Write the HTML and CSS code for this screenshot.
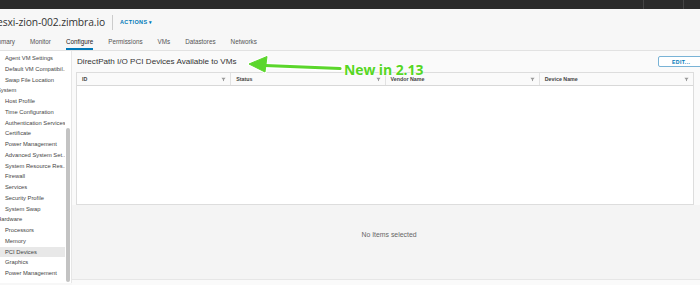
FILE: index.html
```html
<!DOCTYPE html>
<html lang="en">
<head>
    <meta charset="UTF-8">
    <title>esxi-zion-002.zimbra.io - Configure</title>
    <link rel="stylesheet" href="styles.css">
</head>
<body>

<div class="topbar">
    <span class="topbar-sep"></span>
    <span class="topbar-sep"></span>
</div>

<header class="header">
    <div class="title-row">
        <h1 class="host-name">esxi-zion-002.zimbra.io</h1>
        <span class="title-sep"></span>
        <a class="actions">ACTIONS <span class="caret">&#9662;</span></a>
    </div>
    <nav class="tabs">
        <a class="tab first">Summary</a>
        <a class="tab">Monitor</a>
        <a class="tab active">Configure</a>
        <a class="tab">Permissions</a>
        <a class="tab">VMs</a>
        <a class="tab">Datastores</a>
        <a class="tab">Networks</a>
    </nav>
</header>

<div class="content">
    <aside class="sidebar">
        <ul class="nav-list">
            <li class="nav-item">Agent VM Settings</li>
            <li class="nav-item">Default VM Compatibil...</li>
            <li class="nav-item">Swap File Location</li>
            <li class="nav-group">System</li>
            <li class="nav-item">Host Profile</li>
            <li class="nav-item">Time Configuration</li>
            <li class="nav-item">Authentication Services</li>
            <li class="nav-item">Certificate</li>
            <li class="nav-item">Power Management</li>
            <li class="nav-item">Advanced System Set...</li>
            <li class="nav-item">System Resource Res...</li>
            <li class="nav-item">Firewall</li>
            <li class="nav-item">Services</li>
            <li class="nav-item">Security Profile</li>
            <li class="nav-item">System Swap</li>
            <li class="nav-group">Hardware</li>
            <li class="nav-item">Processors</li>
            <li class="nav-item">Memory</li>
            <li class="nav-item selected">PCI Devices</li>
            <li class="nav-item">Graphics</li>
            <li class="nav-item">Power Management</li>
        </ul>
        <div class="scroll-track"><div class="scroll-thumb"></div></div>
    </aside>

    <main class="main">
        <div class="section-head">
            <h2 class="section-title">DirectPath I/O PCI Devices Available to VMs</h2>
            <button class="btn-edit">EDIT...</button>
        </div>

        <div class="grid">
            <div class="grid-head">
                <div class="col">ID <svg class="filter" viewBox="0 0 6 6"><path d="M0.5 1h5L3.6 3.3V5.2L2.4 4.6V3.3z"/></svg></div>
                <div class="col">Status <svg class="filter" viewBox="0 0 6 6"><path d="M0.5 1h5L3.6 3.3V5.2L2.4 4.6V3.3z"/></svg></div>
                <div class="col">Vendor Name <svg class="filter" viewBox="0 0 6 6"><path d="M0.5 1h5L3.6 3.3V5.2L2.4 4.6V3.3z"/></svg></div>
                <div class="col">Device Name <svg class="filter" viewBox="0 0 6 6"><path d="M0.5 1h5L3.6 3.3V5.2L2.4 4.6V3.3z"/></svg></div>
            </div>
            <div class="grid-body"></div>
        </div>

        <div class="details">No Items selected</div>
    </main>
</div>

<!-- annotation drawn over the screenshot -->
<div class="callout">
    <svg class="callout-arrow" width="100" height="22" viewBox="0 0 100 22">
        <path d="M93 13.5 L18 10.5" stroke="#ffffff" stroke-width="6" stroke-linecap="round" fill="none"/>
        <path d="M2 9 L20 1.5 L18 17 Z" fill="#ffffff" stroke="#ffffff" stroke-width="3" stroke-linejoin="round"/>
        <path d="M93 13.5 L18 10.5" stroke="#5bd62c" stroke-width="3.2" stroke-linecap="round" fill="none"/>
        <path d="M2 9 L20 1.5 L18 17 Z" fill="#5bd62c" stroke="#5bd62c" stroke-width="1" stroke-linejoin="round"/>
    </svg>
    <span class="callout-text">New in 2.13</span>
</div>

</body>
</html>
```

FILE: styles.css
```css
* { box-sizing: border-box; }
html, body { margin: 0; padding: 0; }
body { width: 700px; height: 285px; overflow: hidden; background: #f7f7f7; font-family: "Liberation Sans", Arial, sans-serif; color: #333; position: relative; }

.topbar { height: 9px; background: #2b2b2b; display: flex; justify-content: flex-end; gap: 39px; padding-right: 16px; }
.topbar-sep { width: 1px; background: #444; }

.header { height: 42px; background: #f7f7f7; border-bottom: 1px solid #e2e2e2; }
.title-row { height: 25px; display: flex; align-items: center; padding-top: 1px; }
.host-name { margin: 0 0 0 -3px; font-family: "Open Sans", sans-serif; font-weight: 400; font-size: 10.3px; color: #333; letter-spacing: -0.1px; }
.title-sep { width: 1px; height: 15px; background: #ccc; margin: 0 7px 0 7px; }
.actions { font-size: 5.5px; font-weight: bold; color: #0079b8; letter-spacing: 0.4px; }
.caret { font-size: 5px; }

.tabs { display: flex; gap: 15px; height: 16px; }
.tab { font-size: 6.3px; color: #555; line-height: 14px; padding-top: 1px; border-bottom: 2px solid transparent; }
.tab.first { margin-left: -12px; }
.tab.active { color: #222; border-bottom-color: #0079b8; }

.content { display: flex; height: 234px; }

.sidebar { width: 72px; background: #fff; border-right: 1px solid #e6e6e6; display: flex; height: 232px; overflow: hidden; }
.nav-list { list-style: none; margin: 0; padding: 2px 0 0 0; flex: 1; min-width: 0; }
.nav-item, .nav-group { height: 10.75px; line-height: 10.75px; font-size: 5.8px; color: #444; white-space: nowrap; overflow: hidden; }
.nav-item { padding-left: 5px; }
.nav-group { margin-left: -3px; }
.nav-item.selected { background: #e8e8e8; }
.scroll-track { width: 6px; padding: 77px 1px 0 1px; }
.scroll-thumb { height: 154px; background: #c3c3c3; border-radius: 2px; }

.main { flex: 1; display: flex; flex-direction: column; padding-left: 4px; background: #fafafa; }
.section-head { height: 21px; display: flex; align-items: center; justify-content: space-between; }
.section-title { margin: 0; font-size: 8.1px; font-weight: normal; color: #333; padding-left: 1px; }
.btn-edit { margin-right: -12px; width: 54px; height: 11px; padding: 0 0 0 0; border: 1px solid #79b3d6; border-radius: 2px; background: #fff; color: #0079b8; font-family: "Liberation Sans", Arial, sans-serif; font-size: 5.2px; font-weight: bold; letter-spacing: 0.4px; text-align: left; padding-left: 13px; }

.grid { width: 618px; height: 133px; border: 1px solid #ddd; background: #fff; display: flex; flex-direction: column; }
.grid-head { display: flex; height: 13px; background: #fafafa; border-bottom: 1px solid #d8d8d8; }
.col { flex: 1; display: flex; align-items: center; justify-content: space-between; padding: 0 4px 0 5px; font-size: 5.3px; font-weight: bold; color: #444; border-right: 1px solid #e2e2e2; }
.col:last-child { border-right: none; }
.filter { width: 5px; height: 5px; fill: #9a9a9a; }
.grid-body { flex: 1; }

.details { margin-left: -4px; height: 75px; background: #f4f4f4; border-bottom: 1px solid #e6e6e6; display: flex; align-items: flex-start; justify-content: center; padding: 26px 0 0 6px; font-size: 6.9px; color: #666; }

.callout { position: absolute; left: 247px; top: 54px; display: flex; align-items: flex-start; }
.callout-arrow { margin-top: 1px; }
.callout-text { margin-left: -3px; margin-top: 6px; font-family: "Open Sans", sans-serif; font-weight: 700; font-size: 14px; color: #56d624; letter-spacing: -0.1px; text-shadow: 0 0 2px #fff, 0 0 2px #fff, 0 0 1px #fff; }
```
